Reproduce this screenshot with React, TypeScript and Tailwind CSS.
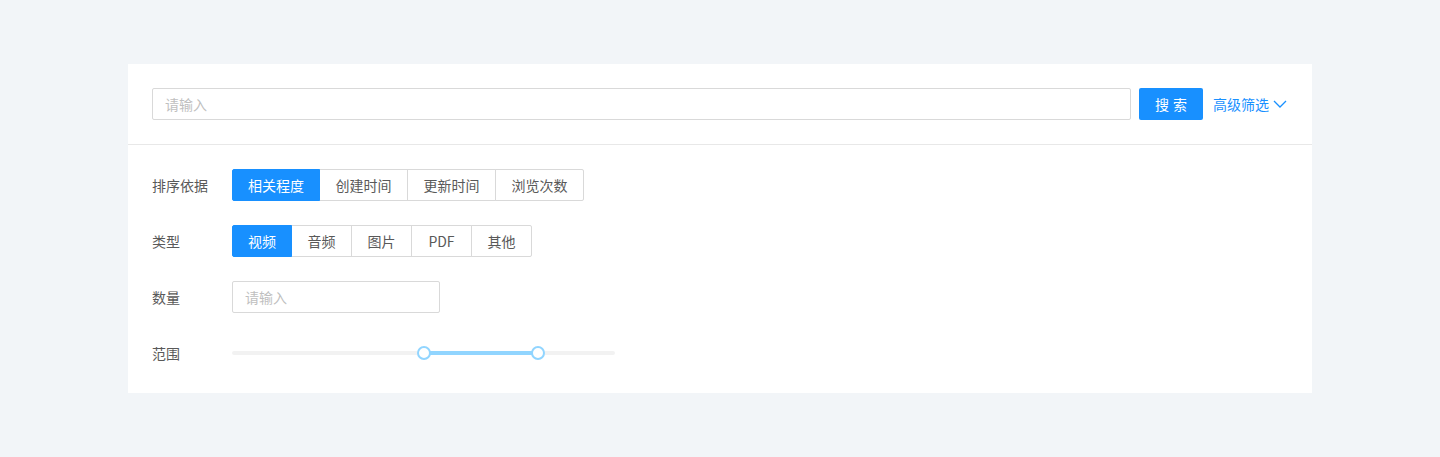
import { useState } from "react";

const sortOptions = ["相关程度", "创建时间", "更新时间", "浏览次数"];
const typeOptions = ["视频", "音频", "图片", "PDF", "其他"];

const FONT = "font-['Helvetica_Neue','Noto_Sans_CJK_SC',sans-serif]";

const ButtonGroup = ({ options, value, onChange, itemClass }) => (
  <div className="flex">
    {options.map((opt, i) => {
      const active = opt === value;
      return (
        <button
          key={opt}
          onClick={() => onChange(opt)}
          className={[
            "h-8 text-sm border",
            itemClass,
            i > 0 ? "-ml-px" : "",
            i === 0 ? "rounded-l-[2px]" : "",
            i === options.length - 1 ? "rounded-r-[2px]" : "",
            active
              ? "bg-[#1890ff] border-[#1890ff] text-white relative z-10"
              : "bg-white border-[#d9d9d9] text-[#595959]",
          ].join(" ")}
        >
          {opt}
        </button>
      );
    })}
  </div>
);

const FilterRow = ({ label, children }) => (
  <div className="flex items-center h-8">
    <div className="w-20 text-sm text-[#595959]">{label}</div>
    {children}
  </div>
);

// range slider, values in percent
const RangeSlider = ({ low, high }) => (
  <div className="relative w-[383px] h-4 flex items-center">
    <div className="w-full h-1 rounded-full bg-[#f2f2f2]" />
    <div
      className="absolute h-1 bg-[#91d5ff]"
      style={{ left: `${low}%`, width: `${high - low}%` }}
    />
    {[low, high].map((v) => (
      <div
        key={v}
        className="absolute w-[14px] h-[14px] -ml-[7px] rounded-full bg-white border-2 border-[#91d5ff]"
        style={{ left: `${v}%` }}
      />
    ))}
  </div>
);

export default function App() {
  const [sortBy, setSortBy] = useState("相关程度");
  const [type, setType] = useState("视频");

  return (
    <div className={`min-h-[457px] bg-[#f2f5f8] pt-16 px-32 ${FONT}`}>
      <div className="bg-white">
        <div className="flex items-center py-6 pl-6 pr-[25px] border-b border-[#e8e8e8]">
          <input
            placeholder="请输入"
            className="flex-1 h-8 px-3 text-sm border border-[#d9d9d9] rounded-[2px] outline-none placeholder:text-[#bfbfbf]"
          />
          <button className="ml-2 w-16 h-8 rounded-[2px] bg-[#1890ff] text-white text-sm tracking-[4px] pl-1">
            搜索
          </button>
          <button className="ml-2.5 flex items-center text-sm text-[#1890ff]">
            高级筛选
            <svg
              width="14"
              height="8"
              viewBox="0 0 14 8"
              fill="none"
              stroke="currentColor"
              strokeWidth="1.3"
              className="ml-1"
            >
              <path d="M1 1l6 6 6-6" />
            </svg>
          </button>
        </div>

        <div className="flex flex-col gap-6 p-6">
          <FilterRow label="排序依据">
            <ButtonGroup
              options={sortOptions}
              value={sortBy}
              onChange={setSortBy}
              itemClass="w-[89px] first:w-[88px]"
            />
          </FilterRow>
          <FilterRow label="类型">
            <ButtonGroup
              options={typeOptions}
              value={type}
              onChange={setType}
              itemClass="w-[61px] first:w-[60px]"
            />
          </FilterRow>
          <FilterRow label="数量">
            <input
              placeholder="请输入"
              className="w-[208px] h-8 px-3 text-sm border border-[#d9d9d9] rounded-[2px] outline-none placeholder:text-[#bfbfbf]"
            />
          </FilterRow>
          <FilterRow label="范围">
            <RangeSlider low={50} high={80} />
          </FilterRow>
        </div>
      </div>
    </div>
  );
}
